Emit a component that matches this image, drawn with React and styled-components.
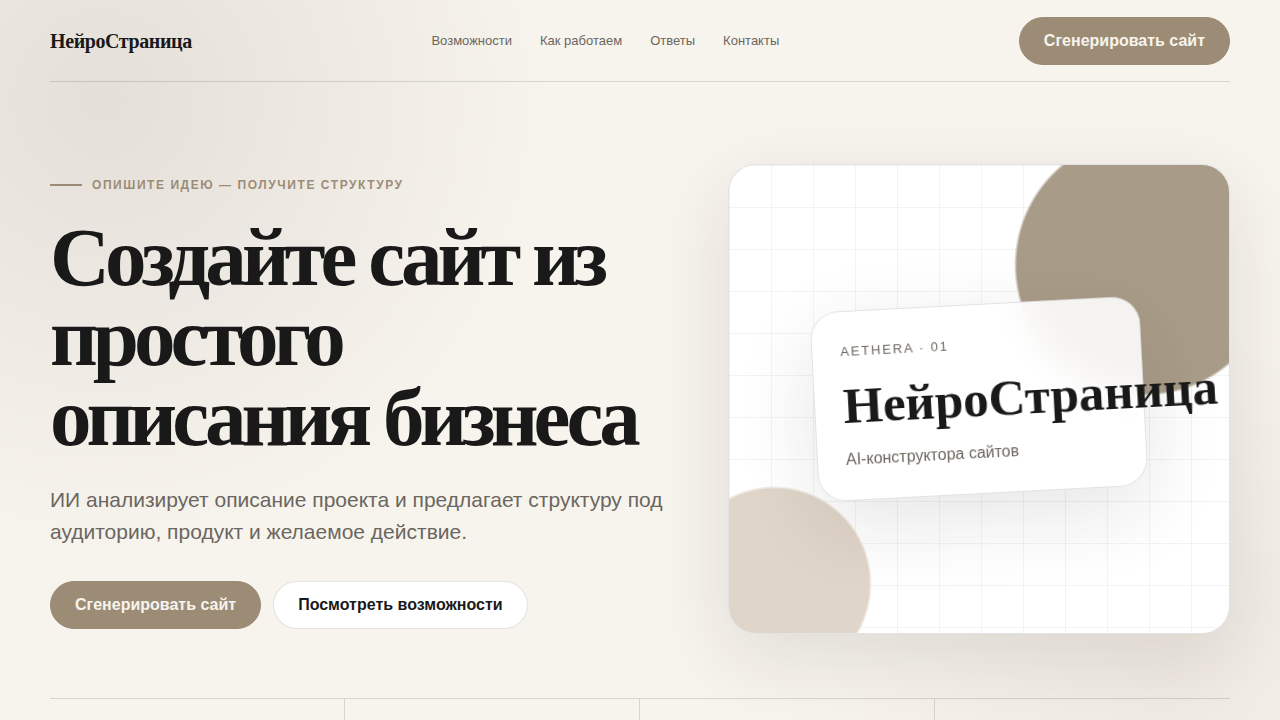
import styled, { createGlobalStyle } from "styled-components";

const GlobalStyle = createGlobalStyle`
	* {
		box-sizing: border-box;
	}
	body {
		margin: 0;
		min-height: 100vh;
		color: #191919;
		font-family: "Liberation Sans", Arial, sans-serif;
		background:
			radial-gradient(circle at 8% 14%, rgba(90, 75, 70, 0.12), transparent 450px),
			radial-gradient(circle at 92% 92%, rgba(156, 130, 110, 0.09), transparent 360px),
			#f7f4ed;
	}
`;

const Page = styled.div`
	max-width: 1280px;
	margin: 0 auto;
	padding: 0 50px;
`;

const Header = styled.header`
	display: flex;
	align-items: center;
	justify-content: space-between;
	height: 82px;
	border-bottom: 1px solid rgba(25, 25, 25, 0.14);
`;

const Brand = styled.a`
	color: #191919;
	font: bold 20px/24px "Liberation Serif", "Times New Roman", serif;
	letter-spacing: -0.02em;
	text-decoration: none;
`;

const Nav = styled.nav`
	display: flex;
	gap: 28px;
`;

const NavLink = styled.a`
	color: #6b665f;
	font-size: 13px;
	line-height: 16px;
	text-decoration: none;
`;

const Button = styled.button`
	height: 48px;
	padding: 0 24px;
	border: 1px solid ${(p) => (p.$light ? "rgba(25, 25, 25, 0.12)" : "#9c8c76")};
	border-radius: 24px;
	background: ${(p) => (p.$light ? "#fff" : "#9c8c76")};
	color: ${(p) => (p.$light ? "#191919" : "#f7f4ed")};
	font: bold 16px/20px "Liberation Sans", Arial, sans-serif;
	cursor: pointer;
`;

const Hero = styled.main`
	display: grid;
	grid-template-columns: 1.1fr 0.9fr;
	align-items: center;
	gap: 64px;
	padding: 82px 0 64px;
`;

const Intro = styled.div`
	padding-top: 9px;
`;

const Eyebrow = styled.p`
	display: flex;
	align-items: center;
	gap: 10px;
	margin: 0 0 25px;
	color: #9c8c76;
	font-size: 12px;
	font-weight: bold;
	line-height: 14px;
	letter-spacing: 0.13em;
	text-transform: uppercase;

	&::before {
		content: "";
		width: 32px;
		height: 2px;
		background: #9c8c76;
	}
`;

const Title = styled.h1`
	margin: 0 0 27px;
	font: bold 83px/80px "Liberation Serif", "Times New Roman", serif;
	letter-spacing: -0.06em;
`;

const Lead = styled.p`
	margin: 0 0 33px;
	color: #6b665f;
	font-size: 21px;
	line-height: 32px;
`;

const Actions = styled.div`
	display: flex;
	flex-wrap: wrap;
	gap: 12px;
`;

const Visual = styled.div`
	display: grid;
	place-items: center;
	min-height: 470px;
	overflow: hidden;
	border: 1px solid rgba(25, 25, 25, 0.12);
	border-radius: 28px;
	background:
		radial-gradient(circle at 416px 100px, #a89c88 128px, transparent 131px) no-repeat padding-box,
		radial-gradient(circle at 45px 419px, #dfd5c8 95px, transparent 98px) no-repeat padding-box,
		linear-gradient(90deg, rgba(25, 25, 25, 0.05) 1px, transparent 1px) 0 0 / 42px 42px padding-box,
		linear-gradient(rgba(25, 25, 25, 0.05) 1px, transparent 1px) 0 0 / 42px 42px padding-box,
		linear-gradient(#fff, #fff) border-box;
	box-shadow: 0 24px 80px rgba(40, 30, 25, 0.11);
`;

const PreviewCard = styled.article`
	width: 66%;
	padding: 28px;
	border: 1px solid rgba(25, 25, 25, 0.12);
	border-radius: 28px;
	background: rgba(255, 255, 255, 0.88);
	backdrop-filter: blur(18px);
	box-shadow: 0 24px 80px rgba(40, 30, 25, 0.11);
	transform: rotate(-3deg);
`;

const PreviewLabel = styled.span`
	display: block;
	color: #6b665f;
	font-size: 13px;
	line-height: 24px;
	letter-spacing: 0.14em;
`;

const PreviewName = styled.strong`
	display: block;
	margin: 17px 0;
	font: bold 51px/50px "Liberation Serif", "Times New Roman", serif;
`;

const PreviewText = styled.span`
	display: block;
	color: #6b665f;
	font-size: 16px;
	line-height: 24px;
`;

const Features = styled.section`
	display: grid;
	grid-template-columns: repeat(4, 1fr);
	border-top: 1px solid rgba(25, 25, 25, 0.14);
`;

const Feature = styled.div`
	min-height: 21px;
	border-right: 1px solid rgba(25, 25, 25, 0.14);

	&:last-child {
		border-right: 0;
	}
`;

const links = ["Возможности", "Как работаем", "Ответы", "Контакты"];

const App = () => {
	return (
		<>
			<GlobalStyle />
			<Page>
				<Header>
					<Brand href="#top">НейроСтраница</Brand>
					<Nav>
						{links.map((link) => (
							<NavLink key={link} href="#">
								{link}
							</NavLink>
						))}
					</Nav>
					<Button>Сгенерировать сайт</Button>
				</Header>
				<Hero>
					<Intro>
						<Eyebrow>Опишите идею — получите структуру</Eyebrow>
						<Title>Создайте сайт из простого описания бизнеса</Title>
						<Lead>
							ИИ анализирует описание проекта и предлагает структуру под
							аудиторию, продукт и желаемое действие.
						</Lead>
						<Actions>
							<Button>Сгенерировать сайт</Button>
							<Button $light>Посмотреть возможности</Button>
						</Actions>
					</Intro>
					<Visual>
						<PreviewCard>
							<PreviewLabel>AETHERA · 01</PreviewLabel>
							<PreviewName>НейроСтраница</PreviewName>
							<PreviewText>AI-конструктора сайтов</PreviewText>
						</PreviewCard>
					</Visual>
				</Hero>
				<Features>
					<Feature />
					<Feature />
					<Feature />
					<Feature />
				</Features>
			</Page>
		</>
	);
};

export default App;
